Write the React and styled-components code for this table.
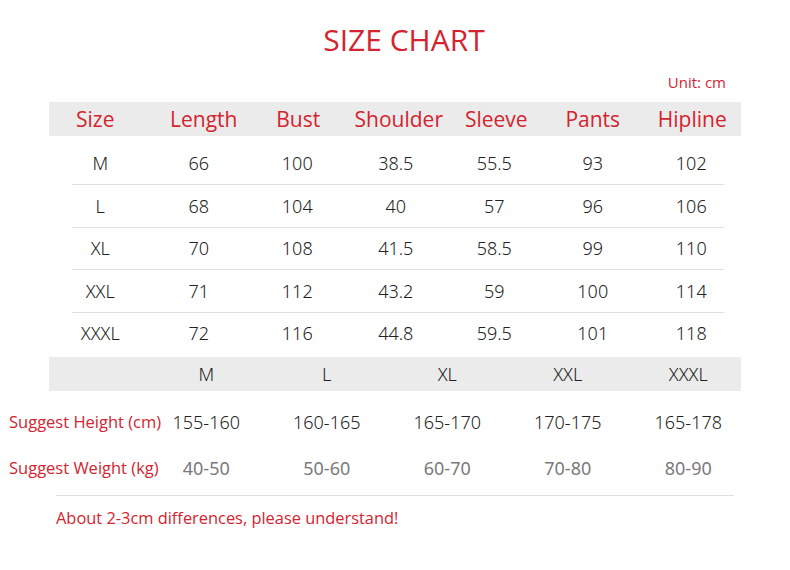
import React from "react"
import styled, { createGlobalStyle } from "styled-components"

const red = "#d3242f"

const GlobalStyle = createGlobalStyle`
    body {
        margin: 0;
        background: #ffffff;
    }
`

const headers = [
    { label: "Size", shift: -5 },
    { label: "Length", shift: 5 },
    { label: "Bust", shift: 1 },
    { label: "Shoulder", shift: 3 },
    { label: "Sleeve", shift: 2 },
    { label: "Pants", shift: 0 },
    { label: "Hipline", shift: 1 },
]

const rows = [
    ["M", "66", "100", "38.5", "55.5", "93", "102"],
    ["L", "68", "104", "40", "57", "96", "106"],
    ["XL", "70", "108", "41.5", "58.5", "99", "110"],
    ["XXL", "71", "112", "43.2", "59", "100", "114"],
    ["XXXL", "72", "116", "44.8", "59.5", "101", "118"],
]

const fitSizes = ["M", "L", "XL", "XXL", "XXXL"]
const heights = ["155-160", "160-165", "165-170", "170-175", "165-178"]
const weights = ["40-50", "50-60", "60-70", "70-80", "80-90"]

const Page = styled.div`
    width: 790px;
    height: 570px;
    font-family: "Open Sans", "Noto Sans", sans-serif;
    color: #222;
    overflow: hidden;
`

const Title = styled.h1`
    margin: 0;
    padding: 19px 0 0 18px;
    height: 42px;
    font-size: 30px;
    font-weight: 400;
    line-height: 42px;
    text-align: center;
    color: ${red};
`

const Unit = styled.div`
    padding: 10px 64px 0 0;
    height: 22px;
    font-size: 15px;
    line-height: 22px;
    text-align: right;
    color: ${red};
`

const Table = styled.div`
    margin: 9px 0 0 49px;
    width: 692px;
`

const HeaderBand = styled.div`
    display: grid;
    grid-template-columns: repeat(7, 98.5px);
    align-items: center;
    height: 34px;
    padding-left: 2px;
    background: #ebebeb;
`

const HeadCell = styled.div`
    text-align: center;
    white-space: nowrap;
    font-size: 21px;
    color: ${red};
    padding-left: ${({ $shift }) => ($shift > 0 ? $shift * 2 : 0)}px;
    padding-right: ${({ $shift }) => ($shift < 0 ? -$shift * 2 : 0)}px;
`

const Body = styled.div`
    padding: 6.5px 0 3px;
`

const Row = styled.div`
    display: grid;
    grid-template-columns: repeat(7, 98.5px);
    align-items: center;
    height: 41.5px;
    padding-left: 2px;
`

const Cell = styled.div`
    text-align: center;
    white-space: nowrap;
    font-family: "Noto Sans", "Open Sans", sans-serif;
    font-weight: 300;
    font-size: 18px;
    color: #222;
`

const Divider = styled.div`
    height: 1px;
    margin: 0 17px 0 23px;
    background: #dedede;
`

const FitBand = styled.div`
    display: grid;
    grid-template-columns: 97px repeat(5, 120.5px);
    align-items: center;
    margin-left: 49px;
    width: 692px;
    height: 34px;
    background: #ebebeb;
`

const FitRows = styled.div`
    padding-top: 8px;
`

const FitRow = styled.div`
    display: grid;
    grid-template-columns: 146px repeat(5, 120.5px);
    align-items: center;
    height: 46px;
`

const FitLabel = styled.div`
    padding-left: 9px;
    margin-top: -2px;
    white-space: nowrap;
    font-size: 16.5px;
    color: ${red};
`

const FitValue = styled.div`
    text-align: center;
    white-space: nowrap;
    font-family: "Noto Sans", "Open Sans", sans-serif;
    font-size: 18px;
    font-weight: ${({ $muted }) => ($muted ? 400 : 300)};
    color: ${({ $muted }) => ($muted ? "#7a7a7a" : "#222")};
`

const Rule = styled.div`
    height: 1px;
    margin: 4px 56px 0 56px;
    background: #dedede;
`

const Note = styled.p`
    margin: 11px 0 0 56px;
    font-size: 16.4px;
    line-height: 22px;
    color: ${red};
`

export default function App() {
    return (
        <Page>
            <GlobalStyle />
            <Title>SIZE CHART</Title>
            <Unit>Unit: cm</Unit>
            <Table>
                <HeaderBand>
                    {headers.map((h) => (
                        <HeadCell key={h.label} $shift={h.shift}>
                            {h.label}
                        </HeadCell>
                    ))}
                </HeaderBand>
                <Body>
                    {rows.map((row, i) => (
                        <React.Fragment key={row[0]}>
                            {i > 0 && <Divider />}
                            <Row>
                                {row.map((v, j) => (
                                    <Cell key={j}>{v}</Cell>
                                ))}
                            </Row>
                        </React.Fragment>
                    ))}
                </Body>
            </Table>
            <FitBand>
                <span />
                {fitSizes.map((s) => (
                    <FitValue key={s}>{s}</FitValue>
                ))}
            </FitBand>
            <FitRows>
                <FitRow>
                    <FitLabel>Suggest Height (cm)</FitLabel>
                    {heights.map((v) => (
                        <FitValue key={v}>{v}</FitValue>
                    ))}
                </FitRow>
                <FitRow>
                    <FitLabel>Suggest Weight (kg)</FitLabel>
                    {weights.map((v) => (
                        <FitValue key={v} $muted>
                            {v}
                        </FitValue>
                    ))}
                </FitRow>
            </FitRows>
            <Rule />
            <Note>About 2-3cm differences, please understand!</Note>
        </Page>
    )
}
